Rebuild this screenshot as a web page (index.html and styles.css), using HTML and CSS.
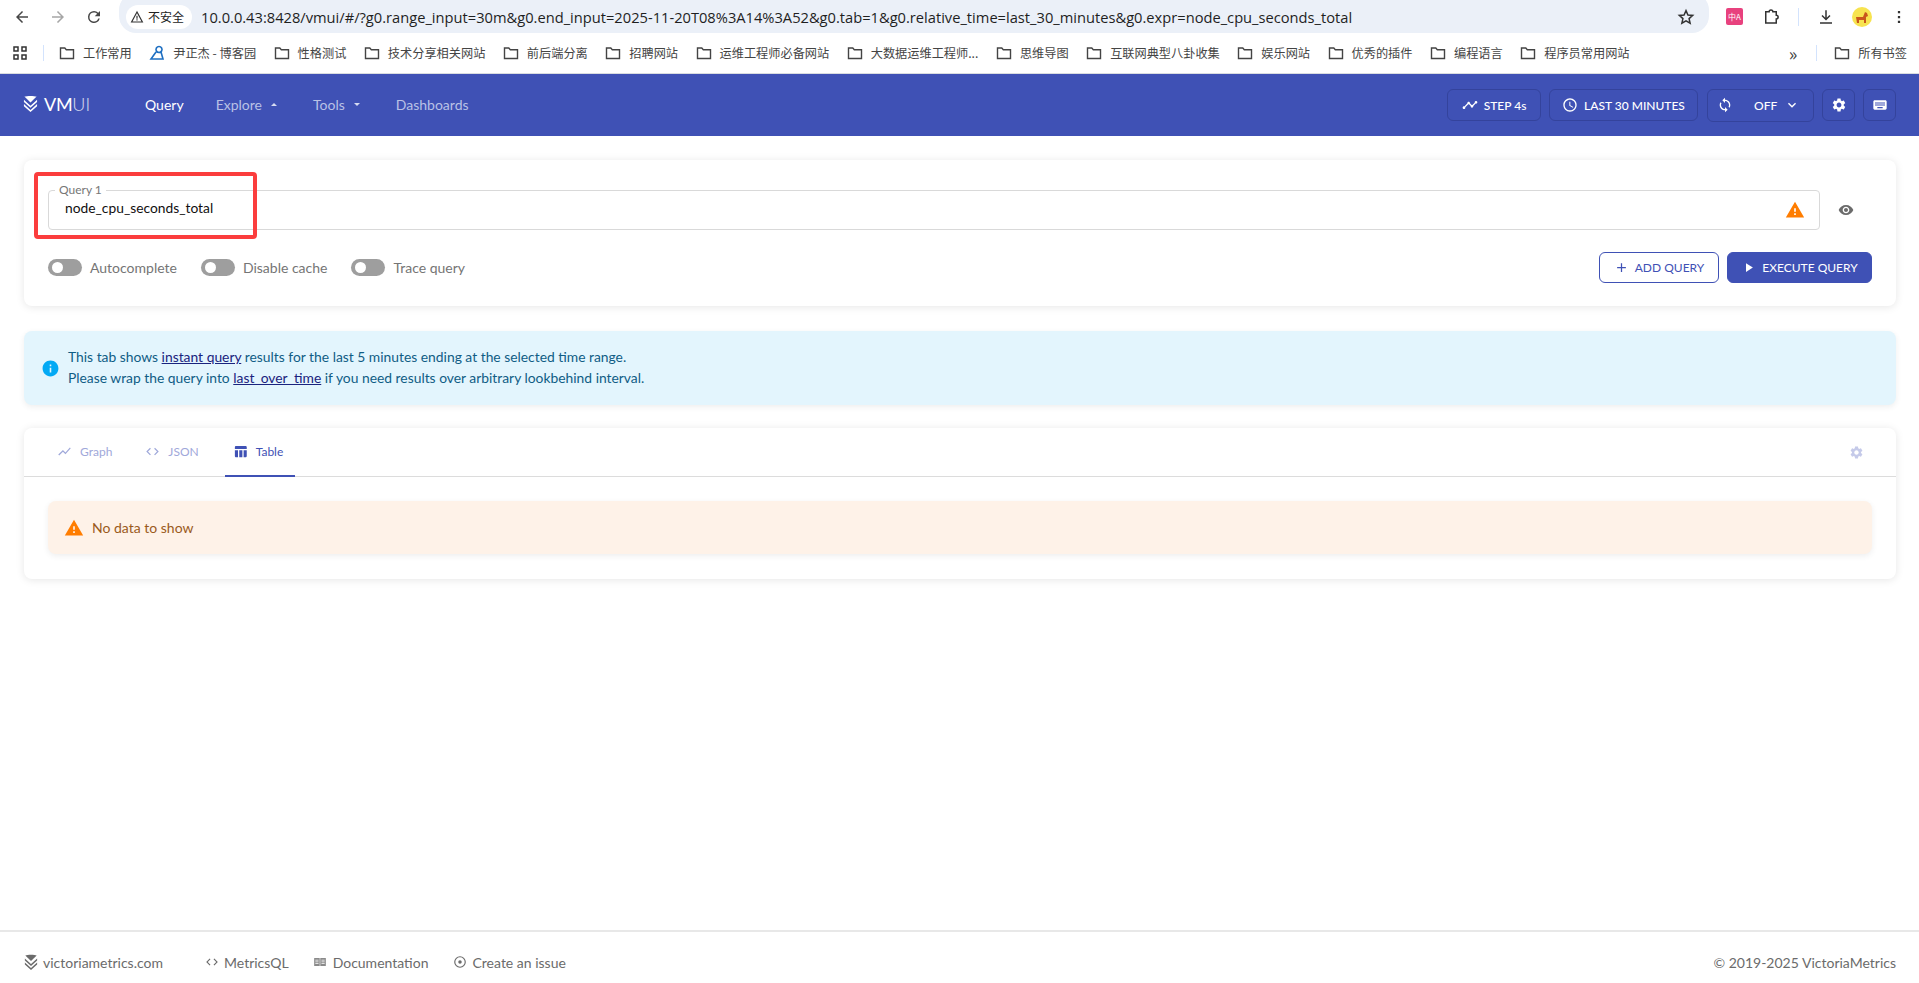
FILE: index.html
```html
<!DOCTYPE html>
<html lang="en">
<head>
  <meta charset="UTF-8" />
  <title>VM UI</title>
  <link rel="stylesheet" href="styles.css">
</head>
<body>
  <!-- browser toolbar -->
  <div class="browser-bar">
    <svg class="nav-icon" viewBox="0 0 24 24"><path fill="#474747" d="M20 11H7.8l5.6-5.6L12 4l-8 8 8 8 1.4-1.4L7.8 13H20z"/></svg>
    <svg class="nav-icon nav-forward" viewBox="0 0 24 24"><path fill="#a6a6a6" d="M4 11h12.2l-5.6-5.6L12 4l8 8-8 8-1.4-1.4 5.6-5.6H4z"/></svg>
    <svg class="nav-icon" viewBox="0 0 24 24"><path fill="#474747" d="M17.65 6.35A7.96 7.96 0 0 0 12 4a8 8 0 1 0 7.73 10h-2.08A6 6 0 1 1 12 6c1.66 0 3.14.69 4.22 1.78L13 11h7V4z"/></svg>
    <div class="address-bar">
      <span class="not-secure">
        <svg class="warn-small" viewBox="0 0 24 24"><path fill="none" stroke="#333" stroke-width="2" d="M12 3.5 2.8 20.5h18.4z"/><path fill="#333" d="M11 10h2v5h-2zM11 16h2v2h-2z"/></svg>
        不安全
      </span>
      <span class="url">10.0.0.43:8428/vmui/#/?g0.range_input=30m&amp;g0.end_input=2025-11-20T08%3A14%3A52&amp;g0.tab=1&amp;g0.relative_time=last_30_minutes&amp;g0.expr=node_cpu_seconds_total</span>
      <svg class="star" viewBox="0 0 24 24"><path fill="none" stroke="#333" stroke-width="2" d="M12 3.5l2.6 5.8 6.3.6-4.8 4.2 1.4 6.2L12 17.1l-5.5 3.2 1.4-6.2L3.1 9.9l6.3-.6z"/></svg>
    </div>
    <div class="browser-actions">
      <span class="translate-ext">中A</span>
      <svg class="nav-icon" viewBox="0 0 24 24"><path fill="none" stroke="#333" stroke-width="2" d="M5 5h4.5a2.5 2.5 0 0 1 5 0H19v4.500a2.500 2.500 0 0 1 0 5V20H5z"/></svg>
      <span class="bar-sep"></span>
      <svg class="nav-icon" viewBox="0 0 24 24"><path fill="#333" d="M11 3h2v10l3.6-3.6L18 10.8l-6 6-6-6 1.400-1.400L11 13zM4 19h16v2H4z"/></svg>
      <span class="avatar"><svg viewBox="0 0 20 20"><circle cx="10" cy="10" r="10" fill="#f7e34f"/><path fill="#c8561c" d="M4 10h7l2-5 2 1 1 3-2 1v6h-2v-3H7v3H5z"/></svg></span>
      <svg class="nav-icon menu-dots" viewBox="0 0 24 24"><path fill="#333" d="M10.5 4h3v3h-3zM10.5 10.5h3v3h-3zM10.5 17h3v3h-3z"/></svg>
    </div>
  </div>

  <!-- bookmarks -->
  <div class="bookmarks">
    <svg class="apps" viewBox="0 0 16 16"><path fill="none" stroke="#333" stroke-width="1.5" d="M2 2h4v4H2zM10 2h4v4h-4zM2 10h4v4H2zM10 10h4v4h-4z"/></svg>
    <span class="bm-sep"></span>
    <div class="bm-list" id="bmList"></div>
    <span class="bm-more">&raquo;</span>
    <span class="bm-sep bm-sep-end"></span>
    <span class="bm-item">
      <svg class="folder" viewBox="0 0 16 16"><path fill="none" stroke="#444" stroke-width="1.4" d="M1.5 3h4.300l1.500 1.700h7.200v8.800h-13z"/></svg>
      所有书签
    </span>
  </div>

  <!-- VMUI header -->
  <header class="header">
    <div class="logo">
      <svg class="logo-mark" viewBox="0 0 16 16" preserveAspectRatio="none"><path fill="#fff" d="M1.500 1.500C4 .6 12 .6 14.500 1.500L8 7zM1 4.500l7 5.500 7-5.500v2L8 12 1 6.500zM1 8.500 8 14l7-5.500v2L8 16l-7-5.500z"/></svg>
      <span class="logo-vm">VM</span><span class="logo-ui">UI</span>
    </div>
    <nav class="nav">
      <span class="nav-link nav-active">Query</span>
      <span class="nav-link">Explore <i class="caret"></i></span>
      <span class="nav-link">Tools <i class="caret"></i></span>
      <span class="nav-link">Dashboards</span>
    </nav>
    <div class="controls">
      <span class="ctl ctl-step">
        <svg class="ctl-icon" viewBox="0 0 24 24"><path fill="#fff" d="M23 8c0 1.100-.9 2-2 2-.18 0-.35-.02-.51-.07l-3.560 3.550c.05.16.07.34.07.52 0 1.100-.9 2-2 2s-2-.9-2-2c0-.18.02-.36.07-.52l-2.550-2.550c-.16.05-.34.07-.52.07s-.36-.02-.52-.07l-4.550 4.560c.05.16.07.33.07.51 0 1.100-.9 2-2 2s-2-.9-2-2 .9-2 2-2c.18 0 .35.02.51.07l4.560-4.550C8.020 9.360 8 9.180 8 9c0-1.100.9-2 2-2s2 .9 2 2c0 .18-.02.36-.07.52l2.550 2.550c.16-.05.34-.07.52-.07s.36.02.52.07l3.550-3.560C19.020 8.350 19 8.180 19 8c0-1.100.9-2 2-2s2 .9 2 2z"/></svg>
        STEP 4s
      </span>
      <span class="ctl ctl-time">
        <svg class="ctl-icon" viewBox="0 0 24 24"><path fill="#fff" d="M11.990 2C6.470 2 2 6.480 2 12s4.470 10 9.990 10C17.520 22 22 17.520 22 12S17.520 2 11.990 2zM12 20c-4.420 0-8-3.580-8-8s3.580-8 8-8 8 3.580 8 8-3.580 8-8 8zm.5-13H11v6l5.250 3.150.75-1.230-4.500-2.670z"/></svg>
        LAST 30 MINUTES
      </span>
      <span class="ctl ctl-refresh">
        <svg class="ctl-icon" viewBox="0 0 24 24"><path fill="#fff" d="M12 4V1L8 5l4 4V6c3.310 0 6 2.690 6 6 0 1.010-.25 1.970-.7 2.800l1.460 1.460C19.540 15.030 20 13.570 20 12c0-4.420-3.580-8-8-8zm0 14c-3.310 0-6-2.690-6-6 0-1.010.25-1.970.7-2.800L5.240 7.740C4.460 8.970 4 10.430 4 12c0 4.420 3.580 8 8 8v3l4-4-4-4v3z"/></svg>
        <span class="off-label">OFF</span>
        <svg class="ctl-icon" viewBox="0 0 24 24"><path fill="#fff" d="M7.410 8.590 12 13.170l4.590-4.580L18 10l-6 6-6-6z"/></svg>
      </span>
      <span class="ctl ctl-square">
        <svg class="ctl-icon" viewBox="0 0 24 24"><path fill="#fff" d="M19.140 12.940c.04-.3.06-.61.06-.94 0-.32-.02-.64-.07-.94l2.030-1.580c.18-.14.23-.41.12-.61l-1.920-3.320c-.12-.22-.37-.29-.59-.22l-2.390.96c-.5-.38-1.030-.7-1.620-.94l-.36-2.540c-.04-.24-.24-.41-.48-.41h-3.840c-.24 0-.43.17-.47.41l-.36 2.540c-.59.24-1.130.57-1.620.94l-2.390-.96c-.22-.08-.47 0-.59.22L2.740 8.870c-.12.21-.08.47.12.61l2.030 1.580c-.05.3-.09.63-.09.94s.02.64.07.94l-2.030 1.580c-.18.14-.23.41-.12.61l1.920 3.320c.12.22.37.29.59.22l2.390-.96c.5.38 1.030.7 1.620.94l.36 2.540c.05.24.24.41.48.41h3.840c.24 0 .44-.17.47-.41l.36-2.540c.59-.24 1.130-.56 1.620-.94l2.390.96c.22.08.47 0 .59-.22l1.920-3.320c.12-.22.07-.47-.12-.61l-2.010-1.580zM12 15.600c-1.980 0-3.600-1.620-3.600-3.600s1.620-3.600 3.600-3.600 3.600 1.620 3.600 3.600-1.620 3.600-3.600 3.600z"/></svg>
      </span>
      <span class="ctl ctl-square">
        <svg class="ctl-icon" viewBox="0 0 24 24"><path fill="#fff" d="M20 5H4c-1.100 0-1.990.9-1.990 2L2 17c0 1.100.9 2 2 2h16c1.100 0 2-.9 2-2V7c0-1.100-.9-2-2-2zm-9 3h2v2h-2V8zm0 3h2v2h-2v-2zM8 8h2v2H8V8zm0 3h2v2H8v-2zm-1 2H5v-2h2v2zm0-3H5V8h2v2zm9 7H8v-2h8v2zm0-4h-2v-2h2v2zm0-3h-2V8h2v2zm3 3h-2v-2h2v2zm0-3h-2V8h2v2z"/></svg>
      </span>
    </div>
  </header>

  <main class="main">
    <!-- query config -->
    <section class="card query-card">
      <div class="query-row">
        <div class="query-input">
          <span class="query-label">Query 1</span>
          <span class="query-text">node_cpu_seconds_total</span>
          <svg class="warn-icon" viewBox="0 0 24 24"><path fill="#ff7d00" d="M1 21h22L12 2 1 21zm12-3h-2v-2h2v2zm0-4h-2v-4h2v4z"/></svg>
        </div>
        <svg class="eye" viewBox="0 0 24 24"><path fill="#6b6b6b" d="M12 4.500C7 4.500 2.730 7.610 1 12c1.730 4.390 6 7.500 11 7.500s9.270-3.110 11-7.500c-1.730-4.390-6-7.500-11-7.500zM12 17c-2.760 0-5-2.240-5-5s2.240-5 5-5 5 2.240 5 5-2.240 5-5 5zm0-8c-1.660 0-3 1.340-3 3s1.340 3 3 3 3-1.340 3-3-1.340-3-3-3z"/></svg>
      </div>
      <div class="query-actions">
        <label class="switch"><i class="switch-track"></i>Autocomplete</label>
        <label class="switch"><i class="switch-track"></i>Disable cache</label>
        <label class="switch"><i class="switch-track"></i>Trace query</label>
        <span class="spacer"></span>
        <button class="btn btn-outline">
          <svg class="btn-icon" viewBox="0 0 24 24"><path fill="#3f51b5" d="M19 13h-6v6h-2v-6H5v-2h6V5h2v6h6v2z"/></svg>
          ADD QUERY
        </button>
        <button class="btn btn-primary">
          <svg class="btn-icon" viewBox="0 0 24 24"><path fill="#fff" d="M8 5v14l11-7z"/></svg>
          EXECUTE QUERY
        </button>
      </div>
      <div class="red-mark"></div>
    </section>

    <div class="alert alert-info">
      <svg class="alert-icon" viewBox="0 0 24 24"><path fill="#03a9f4" d="M12 2C6.480 2 2 6.480 2 12s4.480 10 10 10 10-4.480 10-10S17.520 2 12 2zm1 15h-2v-6h2v6zm0-8h-2V7h2v2z"/></svg>
      <div class="alert-text">
        This tab shows <a class="alert-link">instant query</a> results for the last 5 minutes ending at the selected time range.<br>
        Please wrap the query into <a class="alert-link">last_over_time</a> if you need results over arbitrary lookbehind interval.
      </div>
    </div>

    <!-- results -->
    <section class="card results-card">
      <div class="tabs">
        <span class="tab">
          <svg class="tab-icon" viewBox="0 0 24 24"><path fill="#9fa8da" d="M3.500 18.490l6-6.010 4 4L22 6.920l-1.410-1.410-7.090 7.970-4-4L2 16.990z"/></svg>
          Graph
        </span>
        <span class="tab">
          <svg class="tab-icon" viewBox="0 0 24 24"><path fill="#9fa8da" d="M9.400 16.600 4.800 12l4.600-4.600L8 6l-6 6 6 6 1.400-1.400zm5.200 0 4.600-4.600-4.600-4.600L16 6l6 6-6 6-1.400-1.400z"/></svg>
          JSON
        </span>
        <span class="tab tab-active">
          <svg class="tab-icon" viewBox="0 0 24 24"><path fill="#3f51b5" d="M10 10.020h5V21h-5zM17 21h3c1.100 0 2-.9 2-2v-9h-5v11zm3-18H5c-1.100 0-2 .9-2 2v3h19V5c0-1.100-.9-2-2-2zM3 19c0 1.100.9 2 2 2h3V10H3v9z"/></svg>
          Table
        </span>
        <span class="spacer"></span>
        <svg class="tab-gear" viewBox="0 0 24 24"><path fill="#c5cae9" d="M19.140 12.940c.04-.3.06-.61.06-.94 0-.32-.02-.64-.07-.94l2.030-1.580c.18-.14.23-.41.12-.61l-1.920-3.320c-.12-.22-.37-.29-.59-.22l-2.390.96c-.5-.38-1.030-.7-1.620-.94l-.36-2.540c-.04-.24-.24-.41-.48-.41h-3.840c-.24 0-.43.17-.47.41l-.36 2.540c-.59.24-1.130.57-1.620.94l-2.390-.96c-.22-.08-.47 0-.59.22L2.740 8.870c-.12.21-.08.47.12.61l2.030 1.580c-.05.3-.09.63-.09.94s.02.64.07.94l-2.030 1.580c-.18.14-.23.41-.12.61l1.920 3.320c.12.22.37.29.59.22l2.390-.96c.5.38 1.030.7 1.620.94l.36 2.540c.05.24.24.41.48.41h3.840c.24 0 .44-.17.47-.41l.36-2.540c.59-.24 1.130-.56 1.620-.94l2.390.96c.22.08.47 0 .59-.22l1.920-3.320c.12-.22.07-.47-.12-.61l-2.010-1.580zM12 15.600c-1.980 0-3.600-1.620-3.600-3.600s1.620-3.600 3.600-3.600 3.600 1.620 3.600 3.600-1.620 3.600-3.600 3.600z"/></svg>
      </div>
      <div class="results-body">
        <div class="alert alert-warning">
          <svg class="alert-icon-warn" viewBox="0 0 24 24"><path fill="#ff7d00" d="M1 21h22L12 2 1 21zm12-3h-2v-2h2v2zm0-4h-2v-4h2v4z"/></svg>
          No data to show
        </div>
      </div>
    </section>
  </main>

  <footer class="footer">
    <a class="foot-link foot-site">
      <svg class="foot-icon" viewBox="0 0 16 16" preserveAspectRatio="none"><path fill="#6b6b6b" d="M1.500 1.500C4 .6 12 .6 14.500 1.500L8 7zM1 4.500l7 5.500 7-5.500v2L8 12 1 6.500zM1 8.500 8 14l7-5.500v2L8 16l-7-5.500z"/></svg>
      victoriametrics.com
    </a>
    <a class="foot-link foot-code">
      <svg class="foot-icon" viewBox="0 0 24 24"><path fill="#6b6b6b" d="M9.400 16.600 4.800 12l4.600-4.600L8 6l-6 6 6 6 1.400-1.400zm5.200 0 4.600-4.600-4.600-4.600L16 6l6 6-6 6-1.400-1.400z"/></svg>
      MetricsQL
    </a>
    <a class="foot-link">
      <svg class="foot-icon" viewBox="0 0 24 24"><path fill="#8a8a8a" d="M2 5h9.500v14H2zM12.500 5H22v14h-9.500zM4 8v1.500h5.500V8zM4 11v1.500h5.500V11zM4 14v1.500h5.500V14zM14.500 8v1.500H20V8zM14.500 11v1.500H20V11zM14.500 14v1.500H20V14z"/></svg>
      Documentation
    </a>
    <a class="foot-link">
      <svg class="foot-icon" viewBox="0 0 24 24"><path fill="#6b6b6b" d="M12 2a10 10 0 1 0 0 20 10 10 0 0 0 0-20zm0 18a8 8 0 1 1 0-16 8 8 0 0 1 0 16zm0-11a3 3 0 1 0 0 6 3 3 0 0 0 0-6z"/></svg>
      Create an issue
    </a>
    <span class="spacer"></span>
    <span class="copyright">&copy; 2019-2025 VictoriaMetrics</span>
  </footer>

  <script>
    // bookmark bar entries
    const bookmarks = ["工作常用","尹正杰 - 博客园","性格测试","技术分享相关网站","前后端分离","招聘网站","运维工程师必备网站","大数据运维工程师...","思维导图","互联网典型八卦收集","娱乐网站","优秀的插件","编程语言","程序员常用网站"];
    const folderSvg = '<svg class="folder" viewBox="0 0 16 16"><path fill="none" stroke="#444" stroke-width="1.4" d="M1.5 3h4.3l1.5 1.7h7.200v8.800h-13z"/></svg>';
    const blogSvg = '<svg class="folder" viewBox="0 0 16 16"><path fill="none" stroke="#1e6fc2" stroke-width="1.6" d="M10 1.5a3 3 0 1 0 .01 0zM7 7 2 14h12l-2-7"/></svg>';
    const bmList = document.getElementById("bmList");
    bookmarks.forEach((name, i) => {
      const item = document.createElement("span");
      item.className = "bm-item";
      item.innerHTML = (i === 1 ? blogSvg : folderSvg) + name;
      bmList.appendChild(item);
    });
  </script>
</body>
</html>
```

FILE: styles.css
```css
/* page */
html, body {
  height: 100%;
}
body {
  margin: 0;
  display: flex;
  flex-direction: column;
  background: #fff;
  font-family: Lato, "Noto Sans CJK SC", sans-serif;
  font-size: 14px;
  color: #110f0f;
  overflow: hidden;
}
.spacer {
  flex: 1;
}

/* browser toolbar */
.browser-bar {
  height: 33px;
  display: flex;
  align-items: center;
  padding-left: 13px;
  font-family: "Open Sans", "Noto Sans CJK SC", sans-serif;
  overflow: hidden;
}
.nav-icon {
  width: 18px;
  height: 18px;
  flex: none;
  margin-right: 18px;
}
.address-bar {
  margin-left: -2px;
  width: 1590px;
  height: 40px;
  margin-top: -7px;
  padding: 7px 14px 0 7px;
  display: flex;
  align-items: center;
  background: #ebf0f8;
  border-radius: 17px;
  box-sizing: border-box;
}
.not-secure {
  height: 24px;
  width: 66px;
  flex: none;
  display: flex;
  align-items: center;
  gap: 4px;
  padding-left: 4px;
  box-sizing: border-box;
  background: #fff;
  border-radius: 12px;
  font-family: "Noto Sans CJK SC", sans-serif;
  font-size: 12px;
  color: #222;
}
.warn-small {
  width: 14px;
  height: 14px;
}
.url {
  margin-left: 9px;
  flex: 1;
  font-size: 14.68px;
  color: #1f1f1f;
  white-space: nowrap;
}
.star {
  width: 18px;
  height: 18px;
  flex: none;
}
.browser-actions {
  display: flex;
  align-items: center;
  margin-left: 17px;
}
.browser-actions .nav-icon {
  margin-right: 0;
}
.translate-ext {
  width: 17px;
  height: 17px;
  margin-right: 19px;
  border-radius: 2px;
  background: #e8417e;
  color: #fff;
  font-family: "Noto Sans CJK SC", sans-serif;
  font-size: 8px;
  line-height: 17px;
  text-align: center;
  overflow: hidden;
}
.bar-sep {
  width: 1px;
  height: 18px;
  margin: 0 18px;
  background: #d3e3fd;
}
.avatar {
  width: 20px;
  height: 20px;
  margin-left: 17px;
}
.avatar svg {
  display: block;
}
.browser-actions .menu-dots {
  margin-left: 18px;
}

/* bookmarks */
.bookmarks {
  height: 40px;
  flex: none;
  display: flex;
  align-items: center;
  padding-left: 12px;
  border-bottom: 1px solid #d9dce0;
  font-family: "Noto Sans CJK SC", sans-serif;
  font-size: 12.2px;
  color: #444;
}
.apps {
  width: 16px;
  height: 16px;
  flex: none;
}
.bm-sep {
  width: 1px;
  height: 16px;
  margin: 0 15px;
  background: #d3e3fd;
  flex: none;
}
.bm-sep-end {
  margin: 0 17px 0 14px;
}
.bm-list {
  display: flex;
  gap: 17.5px;
  flex: 1;
}
.bm-item {
  display: flex;
  align-items: center;
  gap: 8px;
  white-space: nowrap;
}
.folder {
  width: 16px;
  height: 16px;
  flex: none;
}
.bm-more {
  font-size: 18px;
  line-height: 16px;
  color: #444;
  margin-right: 5px;
}
.bookmarks > .bm-item {
  margin-right: 12px;
}

/* VMUI header */
.header {
  height: 62px;
  flex: none;
  display: flex;
  align-items: center;
  padding: 0 23px;
  background: #3f51b5;
  color: #fff;
}
.logo {
  width: 122px;
  display: flex;
  align-items: center;
  font-size: 18px;
  margin-top: -3px;
}
.logo-mark {
  width: 15px;
  height: 17px;
  margin-right: 6px;
}
.logo-vm {
  font-weight: 400;
  letter-spacing: -0.3px;
}
.logo-ui {
  font-weight: 300;
  opacity: 0.8;
}
.nav {
  display: flex;
  gap: 32px;
  margin-top: -2px;
}
.nav-link {
  font-size: 14px;
  color: #b9c1e6;
  display: flex;
  align-items: center;
  gap: 9px;
}
.nav-active {
  color: #fff;
}
.caret {
  width: 0;
  height: 0;
  margin-right: 4px;
  border-left: 3px solid transparent;
  border-right: 3px solid transparent;
  border-bottom: 3px solid #d7dcf1;
}
.nav-link:nth-child(3) .caret {
  border-bottom: 0;
  border-top: 3px solid #d7dcf1;
}
.controls {
  margin-left: auto;
  display: flex;
  align-items: center;
  gap: 8px;
}
.ctl {
  height: 32px;
  box-sizing: border-box;
  display: flex;
  align-items: center;
  justify-content: center;
  gap: 6px;
  border: 1px solid #34439c;
  border-radius: 6px;
  font-size: 12px;
  font-weight: 500;
}
.ctl-icon {
  width: 16px;
  height: 16px;
  flex: none;
}
.ctl-step {
  width: 94px;
}
.ctl-time {
  width: 149px;
  margin-right: 1px;
}
.ctl-refresh {
  width: 107px;
  height: 33px;
  justify-content: flex-start;
  padding-left: 9px;
}
.off-label {
  margin-left: 15px;
  margin-right: 1px;
}
.ctl-square {
  width: 33px;
}

/* content */
.main {
  flex: 1;
  padding: 24px 23px 0 24px;
  display: flex;
  flex-direction: column;
  align-items: stretch;
}
.card {
  background: #fff;
  border-radius: 8px;
  box-shadow: 0 1px 8px rgba(0, 0, 0, 0.1);
}
.query-card {
  position: relative;
  height: 146px;
  box-sizing: border-box;
  padding: 30px 24px 0;
}
.query-row {
  display: flex;
  align-items: center;
}
.query-input {
  position: relative;
  flex: 1;
  height: 40px;
  box-sizing: border-box;
  display: flex;
  align-items: center;
  padding: 0 14px 0 16px;
  border: 1px solid #d9d9d9;
  border-radius: 4px;
}
.query-label {
  position: absolute;
  top: -8px;
  left: 6px;
  padding: 0 4px;
  background: #fff;
  font-size: 12px;
  line-height: 14px;
  color: #777;
}
.query-text {
  flex: 1;
  font-size: 13.8px;
  margin-top: -6px;
  color: #110f0f;
}
.warn-icon {
  width: 20px;
  height: 20px;
}
.eye {
  width: 16px;
  height: 16px;
  margin: -1px 18px 0 18px;
}
.query-actions {
  margin-top: 22px;
  display: flex;
  align-items: center;
}
.switch {
  display: flex;
  align-items: center;
  gap: 8px;
  margin-right: 24px;
  font-size: 14px;
  color: #757575;
}
.switch-track {
  position: relative;
  width: 34px;
  height: 17px;
  border-radius: 9px;
  background: #9e9e9e;
}
.switch-track::after {
  content: "";
  position: absolute;
  top: 3px;
  left: 4px;
  width: 11px;
  height: 11px;
  border-radius: 50%;
  background: #fff;
}
.btn {
  height: 31px;
  box-sizing: border-box;
  display: flex;
  align-items: center;
  justify-content: center;
  gap: 6px;
  border-radius: 6px;
  font-family: inherit;
  font-size: 12px;
  font-weight: 400;
  padding: 0;
}
.btn-icon {
  width: 15px;
  height: 15px;
}
.btn-outline {
  width: 120px;
  margin-right: 8px;
  background: #fff;
  border: 1px solid #3f51b5;
  color: #3f51b5;
}
.btn-primary {
  width: 145px;
  background: #3f51b5;
  border: 1px solid #3f51b5;
  color: #fff;
}
.red-mark {
  position: absolute;
  left: 10px;
  top: 12px;
  width: 223px;
  height: 67px;
  box-sizing: border-box;
  border: 4px solid #fb3d3d;
  border-radius: 4px;
}

/* alerts */
.alert {
  border-radius: 8px;
  box-shadow: 0 2px 6px rgba(0, 0, 0, 0.07);
  display: flex;
  align-items: center;
}
.alert-info {
  margin-top: 25px;
  height: 74px;
  padding-left: 17px;
  background: #e3f5fd;
  color: #105d85;
}
.alert-icon {
  width: 19px;
  height: 19px;
  margin-right: 8px;
}
.alert-text {
  line-height: 21px;
  font-size: 13.85px;
  margin-top: -2px;
}
.alert-link {
  color: #1a237e;
  text-decoration: underline;
}

/* results */
.results-card {
  margin-top: 23px;
  height: 151px;
}
.tabs {
  height: 49px;
  box-sizing: border-box;
  display: flex;
  align-items: stretch;
  padding: 0 32px 0 25px;
  border-bottom: 1px solid #dcdcdc;
}
.tab {
  display: flex;
  align-items: center;
  gap: 8px;
  padding: 0 8px 2px;
  margin-right: 17px;
  font-size: 12px;
  color: #9fa8da;
  box-sizing: border-box;
}
.tab-icon {
  width: 15px;
  height: 15px;
}
.tab-active {
  color: #3f51b5;
  border-bottom: 2px solid #3f51b5;
  padding-bottom: 0;
  margin-left: 1px;
  margin-bottom: -1px;
  width: 70px;
}
.tab-gear {
  width: 15px;
  height: 15px;
  align-self: center;
}
.results-body {
  padding: 24px 24px 0;
}
.alert-warning {
  height: 53px;
  padding-left: 16px;
  gap: 8px;
  background: #fef2e8;
  color: #9a5a1c;
  font-size: 14px;
}
.alert-icon-warn {
  width: 20px;
  height: 20px;
}

/* footer */
.footer {
  height: 53px;
  flex: none;
  display: flex;
  align-items: center;
  gap: 24px;
  padding: 9px 23px 0 24px;
  border-top: 2px solid #e8e8e8;
  color: #6b6b6b;
  font-size: 14px;
  box-sizing: border-box;
}
.foot-link {
  display: flex;
  align-items: center;
  gap: 6px;
}
.foot-icon {
  width: 14px;
  height: 14px;
}
.foot-site {
  gap: 5px;
  margin-right: 18px;
}
.foot-site .foot-icon {
  height: 16px;
}
.foot-code {
  gap: 5px;
}
.copyright {
  color: #6b6b6b;
}
```
